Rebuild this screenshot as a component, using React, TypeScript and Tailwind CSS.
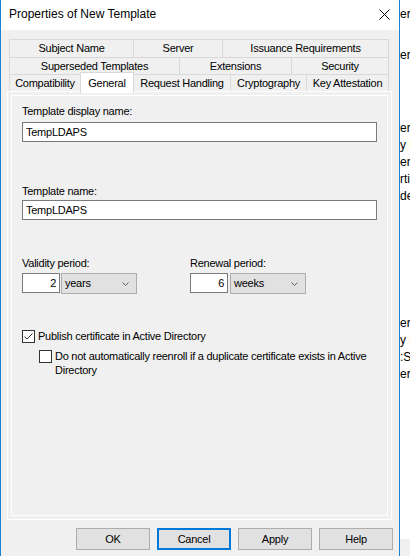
import React from 'react'

const TabCell = ({ w, children }: { w: string; children: React.ReactNode }) => (
  <div className={`${w} flex items-center justify-center border-t border-r border-[#d9d9d9] bg-[#f0f0f0] whitespace-nowrap`}>
    {children}
  </div>
)

const Dropdown = ({ value }: { value: string }) => (
  <div className="w-[76px] h-[21px] flex items-center justify-between pl-[3px] pr-[7px] bg-[#e1e1e1] border border-[#adadad]">
    <span>{value}</span>
    <svg width="7" height="4" viewBox="0 0 7 4" className="mt-[1px]">
      <path d="M0.5 0.5 L3.5 3.5 L6.5 0.5" fill="none" stroke="#606060" strokeWidth="1" />
    </svg>
  </div>
)

const NumberBox = ({ value }: { value: string }) => (
  <div className="w-[38px] h-[20px] flex items-center justify-end pr-[3px] bg-white border border-[#7a7a7a]">
    {value}
  </div>
)

const Button = ({ label, focused }: { label: string; focused?: boolean }) => (
  <button
    className={
      focused
        ? 'w-[74px] h-[22px] bg-[#e1e1e1] border-2 border-[#0078d7] flex items-center justify-center'
        : 'w-[74px] h-[22px] bg-[#e1e1e1] border border-[#adadad] flex items-center justify-center'
    }
  >
    {label}
  </button>
)

export default function App() {
  return (
    <div className="w-[410px] h-[556px] flex bg-white overflow-hidden font-['Liberation_Sans',Arial,sans-serif] text-[11px] tracking-[-0.25px] text-black">
      {/* dialog window */}
      <div className="w-[400px] h-full flex flex-col border-l border-r border-[#1883d7] bg-[#f0f0f0]">
        <div className="h-[30px] bg-white flex items-center justify-between pl-[8px] pr-[9px]">
          <span className="text-[12px] tracking-normal -mt-[2px]">Properties of New Template</span>
          <svg width="11" height="11" viewBox="0 0 11 11" className="-mt-[2px]">
            <path d="M0.5 0.5 L10.5 10.5 M10.5 0.5 L0.5 10.5" stroke="#000" strokeWidth="1" />
          </svg>
        </div>

        {/* tab strip */}
        <div className="mt-[9px] ml-[8px] flex flex-col">
          <div className="flex h-[18px] border-l border-[#d9d9d9]">
            <TabCell w="w-[124px]">Subject Name</TabCell>
            <TabCell w="w-[89px]">Server</TabCell>
            <TabCell w="w-[166px]">Issuance Requirements</TabCell>
          </div>
          <div className="flex h-[17px] border-l border-[#d9d9d9]">
            <TabCell w="w-[170px]">Superseded Templates</TabCell>
            <TabCell w="w-[112px]">Extensions</TabCell>
            <TabCell w="w-[97px]">Security</TabCell>
          </div>
          <div className="flex h-[17px] border-l border-[#d9d9d9] relative z-10">
            <TabCell w="w-[71px]">Compatibility</TabCell>
            <div className="w-[54px] h-[21px] -ml-px -mt-[2px] flex items-start justify-center pt-[2px] bg-white border-l border-t border-r border-[#d9d9d9] whitespace-nowrap">
              General
            </div>
            <TabCell w="w-[97px]">Request Handling</TabCell>
            <TabCell w="w-[76px]">Cryptography</TabCell>
            <TabCell w="w-[82px]">Key Attestation</TabCell>
          </div>
        </div>

        {/* page */}
        <div className="ml-[6px] w-[385px] h-[429px] border border-white p-[3px]">
          <div className="h-full border border-white pl-[10px] pr-[10px] flex flex-col">
            <div className="mt-[8px] leading-[15px]">Template display name:</div>
            <div className="mt-[3px] h-[20px] bg-white border border-[#7a7a7a] flex items-center pl-[3px]">TempLDAPS</div>

            <div className="mt-[42px] leading-[15px]">Template name:</div>
            <div className="mt-[1px] h-[20px] bg-white border border-[#7a7a7a] flex items-center pl-[3px]">TempLDAPS</div>

            <div className="mt-[36px] flex">
              <div className="w-[168px] flex flex-col">
                <div className="leading-[15px]">Validity period:</div>
                <div className="mt-[2px] flex gap-[1px]">
                  <NumberBox value="2" />
                  <Dropdown value="years" />
                </div>
              </div>
              <div className="flex flex-col">
                <div className="leading-[15px]">Renewal period:</div>
                <div className="mt-[2px] flex gap-[2px]">
                  <NumberBox value="6" />
                  <Dropdown value="weeks" />
                </div>
              </div>
            </div>

            <div className="mt-[35px] h-[15px] flex items-center gap-[3px]">
              <div className="w-[13px] h-[13px] bg-white border border-[#333] flex items-center justify-center">
                <svg width="11" height="11" viewBox="0 0 11 11">
                  <path d="M1.5 5.5 L4 8 L9.5 2.5" fill="none" stroke="#333" strokeWidth="1" />
                </svg>
              </div>
              <span>Publish certificate in Active Directory</span>
            </div>

            <div className="mt-[5px] ml-[17px] flex items-start gap-[3px]">
              <div className="mt-[1px] w-[13px] h-[13px] shrink-0 bg-white border border-[#333]" />
              <span className="leading-[14px] whitespace-nowrap">
                Do not automatically reenroll if a duplicate certificate exists in Active
                <br />
                Directory
              </span>
            </div>
          </div>
        </div>

        <div className="mt-[8px] flex justify-end gap-[7px] pr-[6px]">
          <Button label="OK" />
          <Button label="Cancel" focused />
          <Button label="Apply" />
          <Button label="Help" />
        </div>
      </div>

      {/* window behind */}
      <div className="w-[10px] h-full flex flex-col overflow-hidden whitespace-nowrap text-[12px] tracking-normal leading-[16px]">
        <div className="mt-[6px]">er</div>
        <div className="mt-[25px]">er</div>
        <div className="mt-[57px] leading-[17px]">
          <div>er</div>
          <div>y <span className="text-[#c9d45a]">l</span></div>
          <div>er</div>
          <div>rti</div>
          <div>de</div>
        </div>
        <div className="mt-[110px] leading-[17px]">
          <div>er</div>
          <div>y F</div>
          <div>:SI</div>
          <div>er</div>
        </div>
        <div className="mt-auto h-[17px] bg-[#f0f0f0]" />
      </div>
    </div>
  )
}
